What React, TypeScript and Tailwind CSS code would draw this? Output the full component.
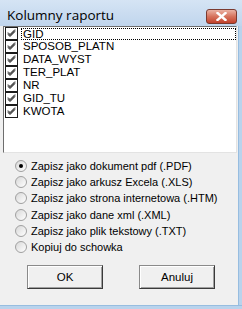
import React from "react";

const columns = ["GID", "SPOSOB_PLATN", "DATA_WYST", "TER_PLAT", "NR", "GID_TU", "KWOTA"];

const formats = [
  "Zapisz jako dokument pdf (.PDF)",
  "Zapisz jako arkusz Excela (.XLS)",
  "Zapisz jako strona internetowa (.HTM)",
  "Zapisz jako dane xml (.XML)",
  "Zapisz jako plik tekstowy (.TXT)",
  "Kopiuj do schowka",
];

function CheckBox() {
  return (
    <div className="w-[13px] h-[13px] border border-[#1c1c1c] bg-white flex items-center justify-center shrink-0">
      <svg width="9" height="9" viewBox="0 0 9 9">
        <path d="M1 3.5 L3 5.5 L8 0.5 M1 4.5 L3 6.5 L8 1.5 M1 5.5 L3 7.5 L8 2.5" stroke="#1a1a1a" strokeWidth="1" fill="none" />
      </svg>
    </div>
  );
}

function Radio({ checked }: { checked?: boolean }) {
  return (
    <div className="w-[12px] h-[12px] rounded-full border border-[#a0a0a0] bg-gradient-to-br from-[#d8d8d8] to-white flex items-center justify-center shrink-0">
      {checked && <div className="w-[4px] h-[4px] rounded-full bg-black" />}
    </div>
  );
}

function Button({ label }: { label: string }) {
  return (
    <div className="w-[76px] h-[24px] border border-t-[#8a8a8a] border-l-[#8a8a8a] border-r-[#3a3a3a] border-b-[#3a3a3a] shadow-[inset_1px_1px_0_#ffffff,inset_-1px_-1px_0_#a0a0a0] bg-[#f0f0f0] flex items-center justify-center text-[11.5px] text-black">
      {label}
    </div>
  );
}

export default function App() {
  return (
    <div className="w-[242px] h-[309px] overflow-hidden bg-[#b9d3ec] flex flex-col" style={{ fontFamily: '"Liberation Sans", Arial, sans-serif' }}>
      {/* Title bar */}
      <div className="h-[26px] shrink-0 flex items-start pl-[7px] bg-gradient-to-b from-[#d5e4f4] to-[#c0d5ed]">
        <span className="mt-[6px] text-[13.5px] leading-[18px] text-black" style={{ fontFamily: '"Open Sans", "Noto Sans", sans-serif' }}>
          Kolumny raportu
        </span>
        <div className="ml-auto mt-[9px] mr-[5px] w-[31px] h-[15px] rounded-[3px] border border-[#7a3a30] bg-gradient-to-b from-[#eab2a4] via-[#d6735d] to-[#c2402a] flex items-center justify-center">
          <svg width="11" height="9" viewBox="0 0 11 9">
            <path d="M1.5 1 L9.5 8 M9.5 1 L1.5 8" stroke="white" strokeWidth="2.4" strokeLinecap="square" />
          </svg>
        </div>
      </div>

      <div className="flex flex-1 min-h-0">
        {/* Body */}
        <div className="w-[238px] bg-[#f0f0f0] flex flex-col">
          {/* List */}
          <div className="ml-[3px] mr-[1px] h-[127px] border border-t-[#6d6d6d] border-l-[#6d6d6d] border-r-[#e3e3e3] border-b-[#e3e3e3] bg-white">
            <div className="text-[11.5px] leading-[13px] text-black">
              {columns.map((c, i) => (
                <div key={c} className="flex items-center h-[13px] pl-[1px]">
                  <CheckBox />
                  <span className={i === 0 ? "ml-[3px] pl-[1px] flex-1 border border-dotted border-black h-[12px] leading-[10px]" : "ml-[4px] pl-[1px] flex-1"}>{c}</span>
                </div>
              ))}
            </div>
          </div>

          {/* Radio options */}
          <div className="mt-[5px] pl-[15px] flex flex-col text-[11px] text-black">
            {formats.map((f, i) => (
              <div key={f} className="flex items-center h-[16.2px] gap-[4px]">
                <Radio checked={i === 0} />
                <span className="leading-[14px]">{f}</span>
              </div>
            ))}
          </div>

          {/* Buttons */}
          <div className="mt-[10px] flex pl-[27px] gap-[36px]">
            <Button label="OK" />
            <Button label="Anuluj" />
          </div>
        </div>
        {/* Right frame */}
        <div className="flex-1 border-l border-[#97bde0] bg-[#b9d3ec]" />
      </div>
      <div className="h-[4px] shrink-0 bg-[#b9d3ec] border-t border-[#97bde0]" />
    </div>
  );
}
